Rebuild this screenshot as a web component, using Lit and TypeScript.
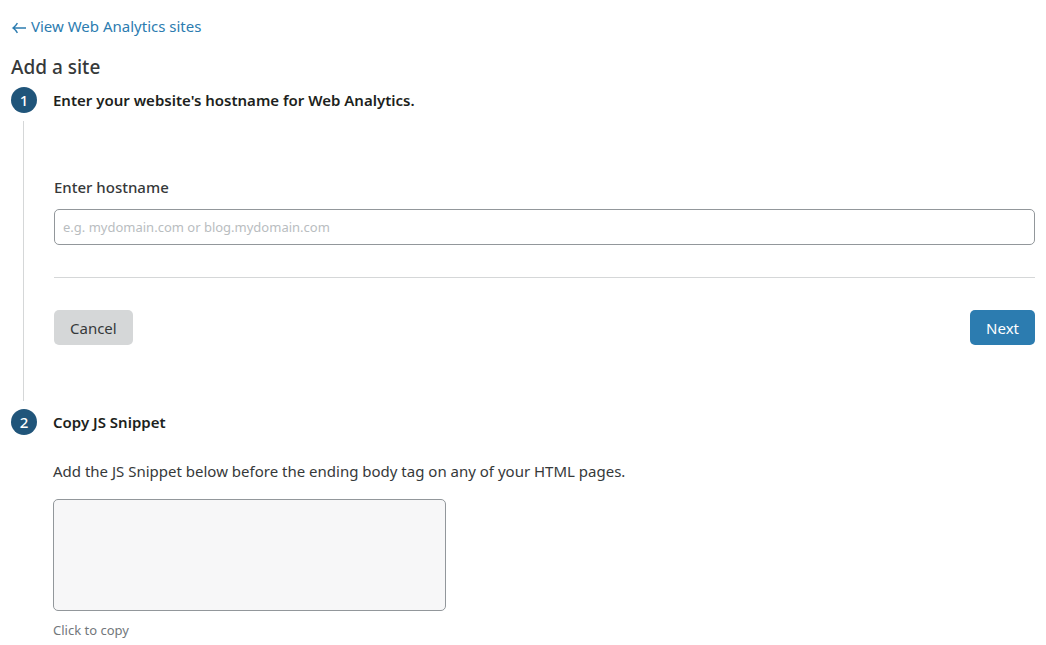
import { LitElement, html, css } from "lit";
import { customElement } from "lit/decorators.js";

@customElement("app-root")
export class AppRoot extends LitElement {
  static styles = css`
    :host {
      display: block;
      font-family: "Noto Sans", sans-serif;
      font-size: 15px;
      line-height: 24px;
      color: #36393a;
      background: #fff;
    }
    * { box-sizing: border-box; }
    .page { padding: 14px 11px; }
    .back {
      display: flex;
      width: fit-content;
      align-items: center;
      gap: 4px;
      color: #2c7cb0;
      text-decoration: none;
    }
    .arrow { width: 16px; height: 16px; }
    .title {
      margin: 17px 0 8px;
      font-size: 19px;
      font-weight: 500;
      line-height: 24px;
    }
    .steps { margin: 0; padding: 0; list-style: none; }
    .step { display: grid; grid-template-columns: 26px minmax(0, 1fr); column-gap: 16px; }
    .rail { display: flex; flex-direction: column; gap: 8px; }
    .badge {
      display: flex;
      align-items: center;
      justify-content: center;
      width: 26px;
      height: 26px;
      border-radius: 50%;
      background: #20557a;
      color: #fff;
      font-weight: 500;
    }
    .line { flex: 1; width: 13px; margin-bottom: 8px; border-right: 1px solid #d5d7d8; }
    .heading { margin: 0; font-size: 15px; font-weight: 600; line-height: 26px; color: #1d1f20; }
    .form { padding: 62px 0 64px 1px; }
    .label { display: block; margin-bottom: 10px; font-weight: 500; }
    .host {
      display: block;
      width: 100%;
      height: 36px;
      padding: 0 8px;
      border: 1px solid #92979b;
      border-radius: 5px;
      background: #fff;
      color: #36393a;
      font: inherit;
      font-size: 13px;
    }
    .host::placeholder { color: #b9bdbf; opacity: 1; }
    .actions {
      display: flex;
      justify-content: space-between;
      margin-top: 32px;
      padding-top: 32px;
      border-top: 1px solid #d5d7d8;
    }
    .button {
      height: 35px;
      padding: 0 16px;
      border: 0;
      border-radius: 5px;
      background: #d5d7d8;
      color: #36393a;
      font: inherit;
    }
    .primary { background: #2c7cb0; color: #fff; }
    .note { margin: 24px 0 16px; }
    .snippet {
      display: block;
      width: 40%;
      height: 112px;
      border: 1px solid #92979b;
      border-radius: 5px;
      background: #f7f7f8;
      resize: none;
    }
    .hint { margin: 8px 0 0; font-size: 13px; line-height: 22px; color: #72777b; }
  `;

  render() {
    return html`
      <main class="page">
        <a class="back" href="#sites">
          <svg class="arrow" viewBox="0 0 16 16" fill="none" stroke="currentColor" stroke-width="1.4" aria-hidden="true">
            <path d="M15 10H2M6.4 5.2Q4.6 8.4 2 10q2.6 1.6 4.4 4.8" />
          </svg>
          View Web Analytics sites
        </a>
        <h1 class="title">Add a site</h1>
        <ol class="steps">
          <li class="step">
            <div class="rail"><span class="badge">1</span><span class="line"></span></div>
            <div>
              <h2 class="heading">Enter your website's hostname for Web Analytics.</h2>
              <form class="form" @submit=${(e: Event) => e.preventDefault()}>
                <label class="label" for="hostname">Enter hostname</label>
                <input class="host" id="hostname" type="text" placeholder="e.g. mydomain.com or blog.mydomain.com" />
                <div class="actions">
                  <button class="button" type="button">Cancel</button>
                  <button class="button primary" type="submit">Next</button>
                </div>
              </form>
            </div>
          </li>
          <li class="step">
            <div class="rail"><span class="badge">2</span></div>
            <div>
              <h2 class="heading">Copy JS Snippet</h2>
              <p class="note">Add the JS Snippet below before the ending body tag on any of your HTML pages.</p>
              <textarea class="snippet" aria-label="JS Snippet" readonly></textarea>
              <p class="hint">Click to copy</p>
            </div>
          </li>
        </ol>
      </main>
    `;
  }
}
